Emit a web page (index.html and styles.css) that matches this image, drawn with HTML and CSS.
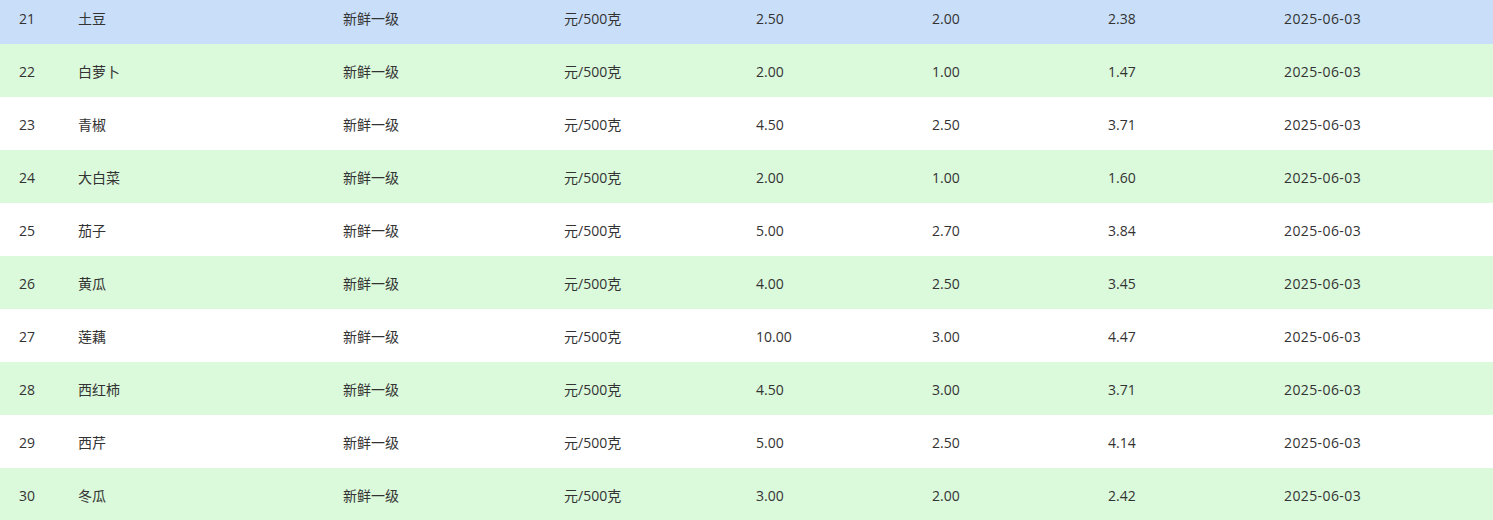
FILE: index.html
```html
<!DOCTYPE html>
<html lang="zh-CN">
<head>
<meta charset="utf-8">
<title>蔬菜价格</title>
<link rel="stylesheet" href="styles.css">
</head>
<body>
<table class="price-table">
  <colgroup>
    <col class="c-no"><col class="c-name"><col class="c-grade"><col class="c-unit">
    <col class="c-num"><col class="c-num"><col class="c-num"><col class="c-date">
  </colgroup>
  <tbody>
    <tr class="row current"><td>21</td><td>土豆</td><td>新鲜一级</td><td>元/500克</td><td>2.50</td><td>2.00</td><td>2.38</td><td class="date">2025-06-03</td></tr>
    <tr class="row stripe"><td>22</td><td>白萝卜</td><td>新鲜一级</td><td>元/500克</td><td>2.00</td><td>1.00</td><td>1.47</td><td class="date">2025-06-03</td></tr>
    <tr class="row"><td>23</td><td>青椒</td><td>新鲜一级</td><td>元/500克</td><td>4.50</td><td>2.50</td><td>3.71</td><td class="date">2025-06-03</td></tr>
    <tr class="row stripe"><td>24</td><td>大白菜</td><td>新鲜一级</td><td>元/500克</td><td>2.00</td><td>1.00</td><td>1.60</td><td class="date">2025-06-03</td></tr>
    <tr class="row"><td>25</td><td>茄子</td><td>新鲜一级</td><td>元/500克</td><td>5.00</td><td>2.70</td><td>3.84</td><td class="date">2025-06-03</td></tr>
    <tr class="row stripe"><td>26</td><td>黄瓜</td><td>新鲜一级</td><td>元/500克</td><td>4.00</td><td>2.50</td><td>3.45</td><td class="date">2025-06-03</td></tr>
    <tr class="row"><td>27</td><td>莲藕</td><td>新鲜一级</td><td>元/500克</td><td>10.00</td><td>3.00</td><td>4.47</td><td class="date">2025-06-03</td></tr>
    <tr class="row stripe"><td>28</td><td>西红柿</td><td>新鲜一级</td><td>元/500克</td><td>4.50</td><td>3.00</td><td>3.71</td><td class="date">2025-06-03</td></tr>
    <tr class="row"><td>29</td><td>西芹</td><td>新鲜一级</td><td>元/500克</td><td>5.00</td><td>2.50</td><td>4.14</td><td class="date">2025-06-03</td></tr>
    <tr class="row stripe"><td>30</td><td>冬瓜</td><td>新鲜一级</td><td>元/500克</td><td>3.00</td><td>2.00</td><td>2.42</td><td class="date">2025-06-03</td></tr>
  </tbody>
</table>
</body>
</html>
```

FILE: styles.css
```css
html, body {
  margin: 0;
  padding: 0;
  background: #ffffff;
  overflow: hidden;
}
body {
  font-family: "Open Sans", "Noto Sans CJK SC", sans-serif;
  font-size: 14px;
  color: #333333;
}
.price-table {
  width: 1493px;
  border-collapse: collapse;
  table-layout: fixed;
  margin-top: -9px;
}
.c-no { width: 59px; }
.c-name { width: 265px; }
.c-grade { width: 221px; }
.c-unit { width: 192px; }
.c-num { width: 176px; }
.c-date { width: 228px; }
.row {
  height: 53px;
  background: #ffffff;
}
.row.stripe { background: #dbf9db; }
.row.current { background: #c9dff9; }
.row td {
  padding: 2px 0 0 19px;
  vertical-align: middle;
  white-space: nowrap;
  line-height: 20px;
}
.row td.date {
  letter-spacing: 0.4px;
}
```
